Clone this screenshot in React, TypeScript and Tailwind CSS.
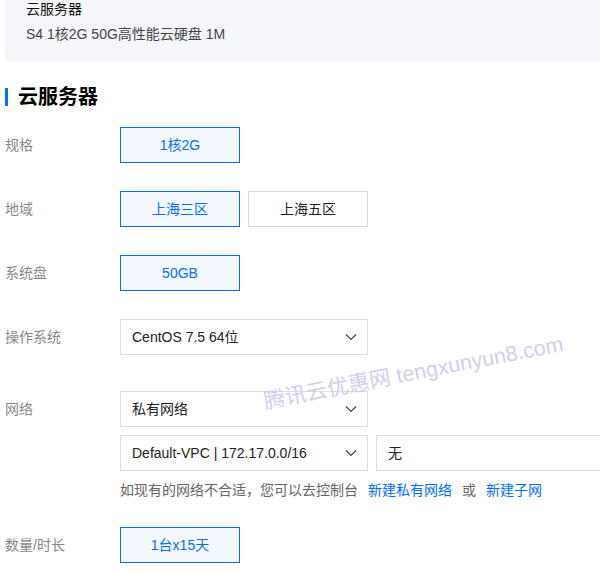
import { ReactNode } from "react"

const font = { fontFamily: '"Liberation Sans", "Noto Sans CJK SC", sans-serif' }

function Chevron() {
  return (
    <svg width="12" height="8" viewBox="0 0 12 8" className="shrink-0">
      <polyline points="1,1.5 6,6.5 11,1.5" fill="none" stroke="#444" strokeWidth="1.2" />
    </svg>
  )
}

function Option({ children, active }: { children: ReactNode; active?: boolean }) {
  return (
    <div
      className={
        active
          ? "flex h-9 w-[120px] shrink-0 items-center justify-center border border-[#006eff] bg-[#f4f9ff] text-[14px] text-[#006eff]"
          : "flex h-9 w-[120px] shrink-0 items-center justify-center border border-[#d9d9d9] bg-white text-[14px] text-[#222]"
      }
    >
      {children}
    </div>
  )
}

function Select({ children }: { children: ReactNode }) {
  return (
    <div className="flex h-9 w-[248px] shrink-0 items-center justify-between border border-[#dcdcdc] bg-white pl-[11px] pr-[10px] text-[14px] text-[#222]">
      <span className="whitespace-nowrap">{children}</span>
      <Chevron />
    </div>
  )
}

function Row({ label, children, className = "" }: { label: string; children: ReactNode; className?: string }) {
  return (
    <div className={"flex " + className}>
      <div className="flex h-9 w-[115px] shrink-0 items-center text-[14px] text-[#888]">{label}</div>
      <div className="min-w-0 flex-1">{children}</div>
    </div>
  )
}

export default function App() {
  return (
    <div className="relative h-[573px] w-[600px] overflow-hidden bg-white pl-[5px]" style={font}>
      <div className="h-[62px] bg-[#f5f6fa] pl-[21px]">
        <div className="-mt-[1px] text-[14px] leading-[20px] text-[#111]">云服务器</div>
        <div className="mt-[5px] text-[14px] leading-[20px] text-[#444]">S4 1核2G 50G高性能云硬盘 1M</div>
      </div>

      <div className="mt-[25px] flex items-center">
        <div className="h-[18px] w-[3px] bg-[#006eff]" />
        <h2 className="ml-[10px] text-[20px] font-bold leading-[22px] text-[#000]">云服务器</h2>
      </div>

      <div className="mt-[19px] flex flex-col">
        <Row label="规格">
          <Option active>1核2G</Option>
        </Row>
        <Row label="地域" className="mt-[28px]">
          <div className="flex gap-2">
            <Option active>上海三区</Option>
            <Option>上海五区</Option>
          </div>
        </Row>
        <Row label="系统盘" className="mt-[28px]">
          <Option active>50GB</Option>
        </Row>
        <Row label="操作系统" className="mt-[28px]">
          <Select>CentOS 7.5 64位</Select>
        </Row>
        <Row label="网络" className="mt-[36px]">
          <Select>私有网络</Select>
          <div className="mt-2 flex gap-2">
            <Select>Default-VPC | 172.17.0.0/16</Select>
            <div className="flex h-9 w-[260px] shrink-0 items-center border border-[#dcdcdc] bg-white pl-[11px] text-[14px] text-[#222]">
              无
            </div>
          </div>
          <div className="mt-[9px] whitespace-nowrap text-[14px] leading-[20px] text-[#666]">
            如现有的网络不合适，您可以去控制台
            <span className="ml-[10px] text-[#006eff]">新建私有网络</span>
            <span className="mx-[10px] text-[#666]">或</span>
            <span className="text-[#006eff]">新建子网</span>
          </div>
        </Row>
        <Row label="数量/时长" className="mt-[27px]">
          <Option active>1台x15天</Option>
        </Row>
      </div>

      <div
        className="pointer-events-none absolute left-[264px] top-[386px] origin-left whitespace-nowrap text-[21.5px] text-[#d6cbec]"
        style={{ transform: "rotate(-11deg)" }}
      >
        腾讯云优惠网 tengxunyun8.com
      </div>
    </div>
  )
}
